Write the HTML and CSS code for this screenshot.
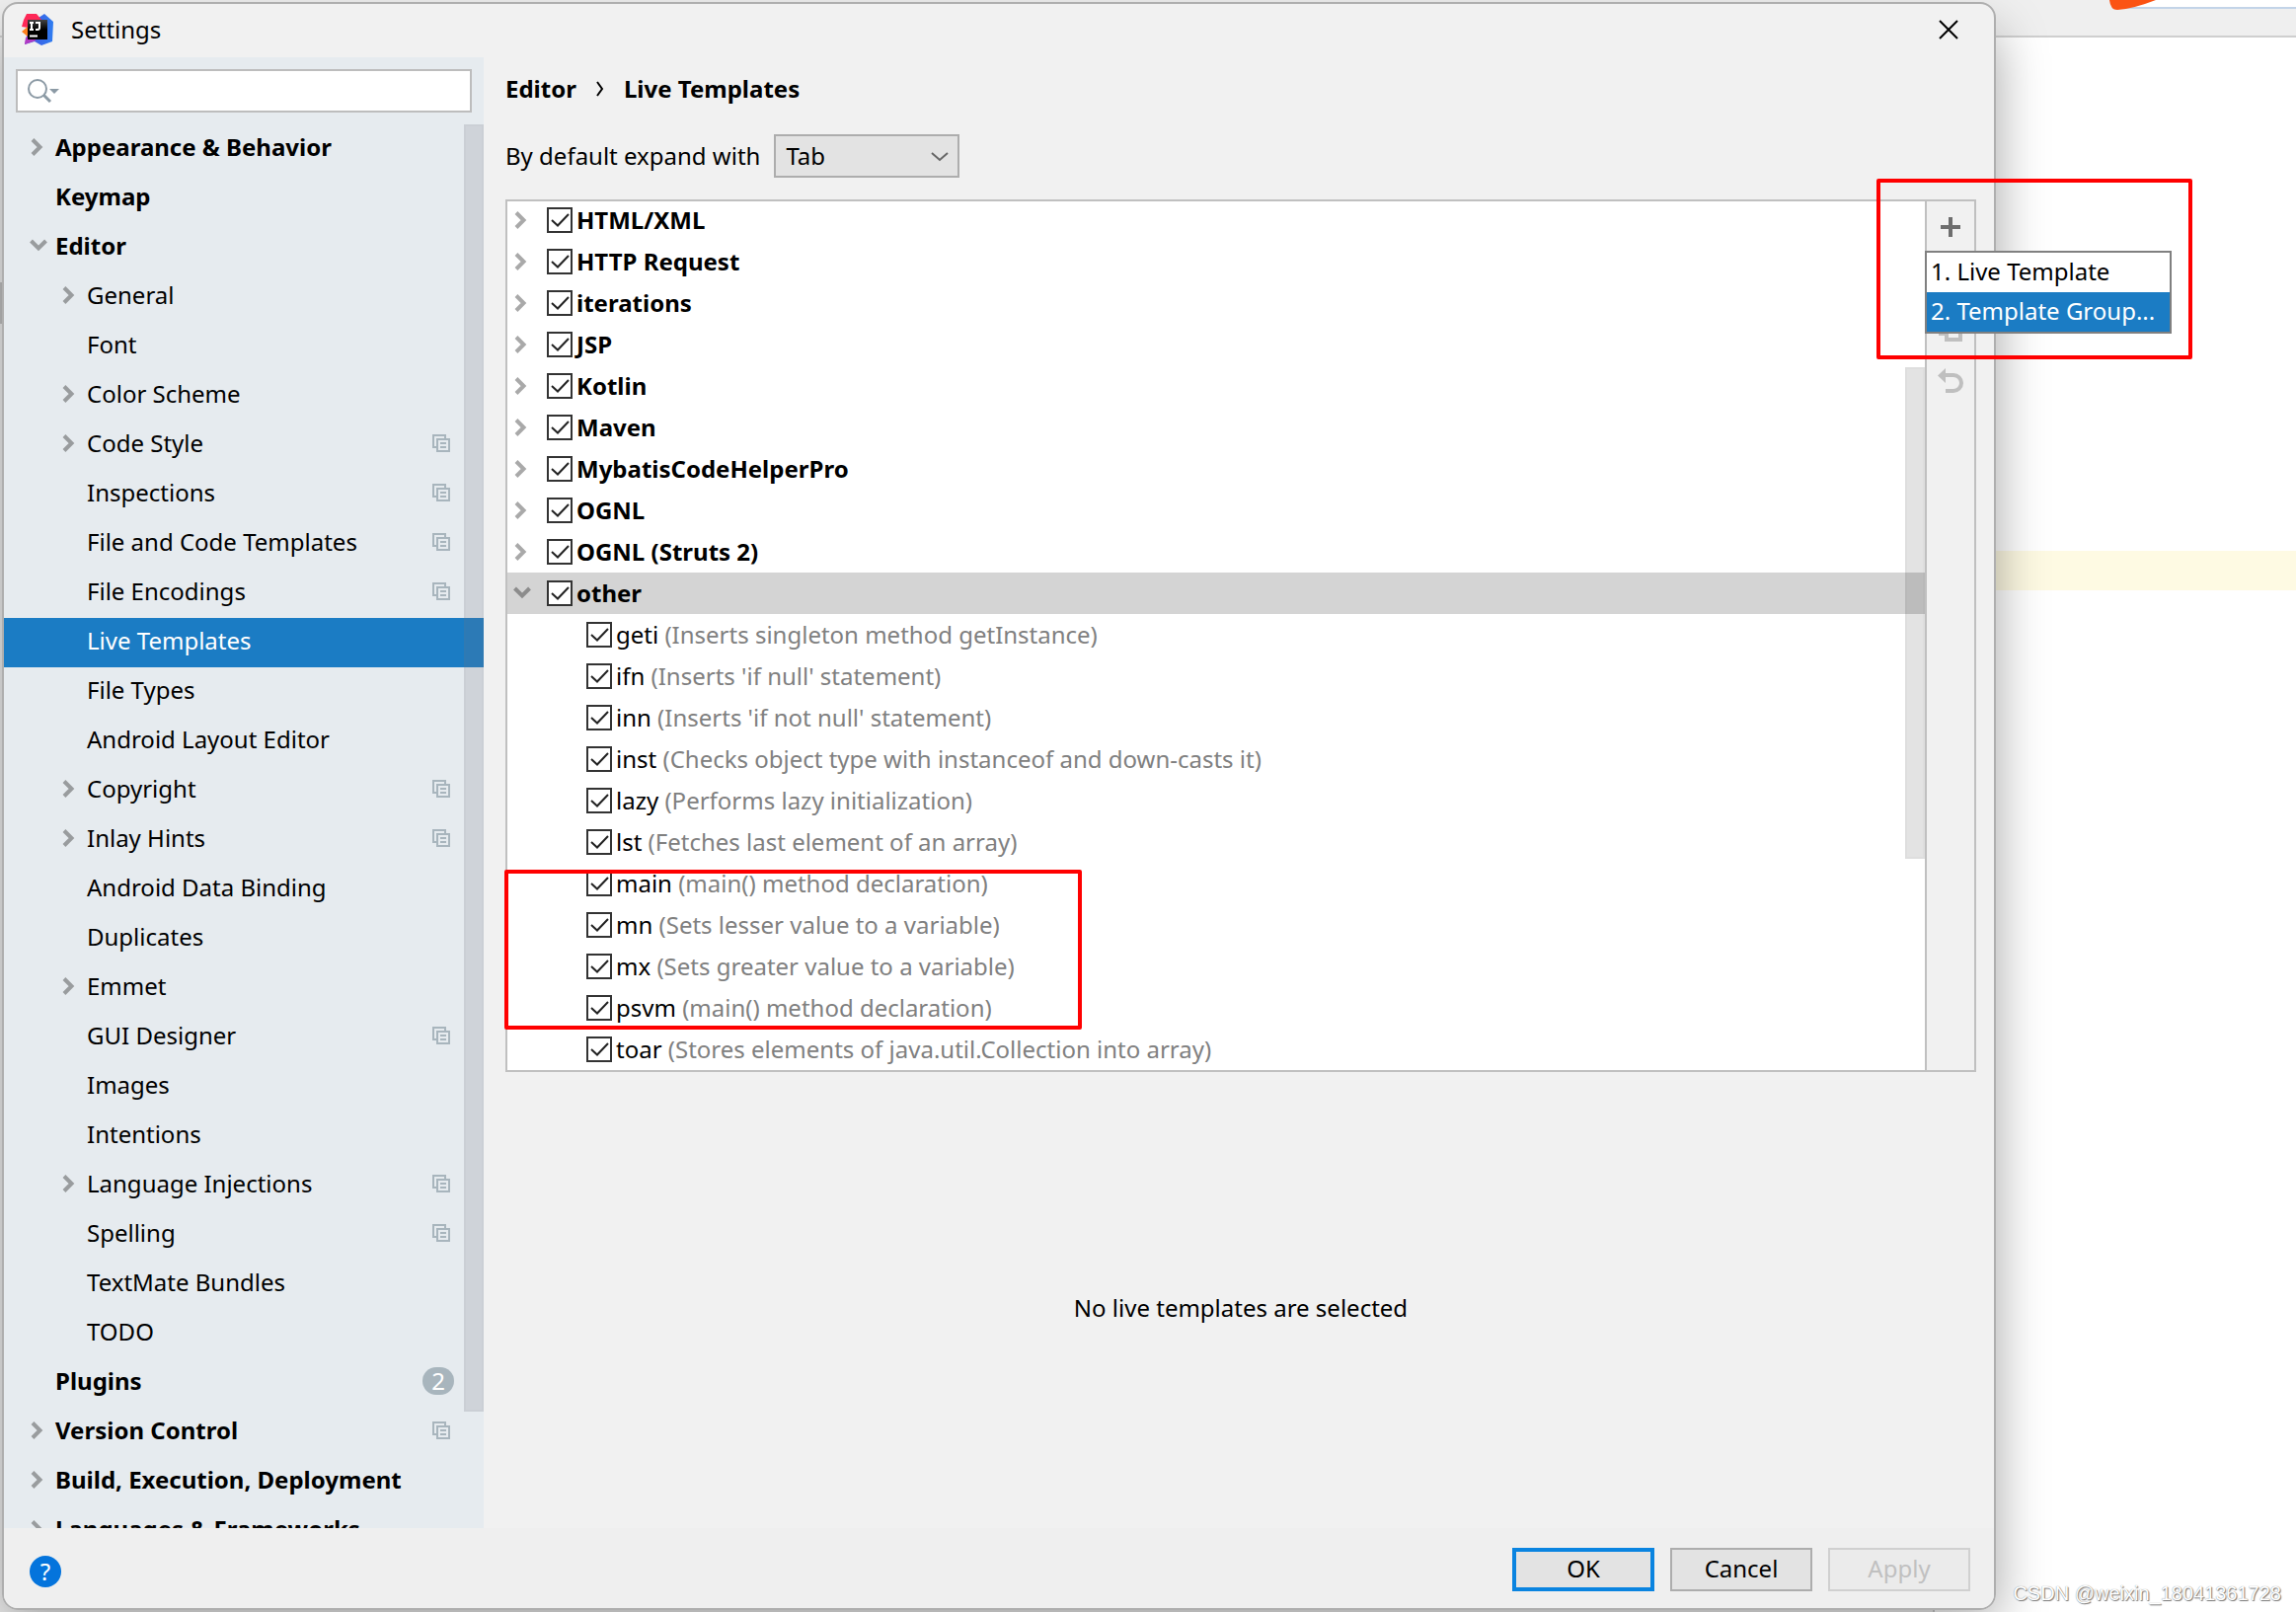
FILE: index.html
```html
<!DOCTYPE html>
<html lang="en">
<head>
<meta charset="utf-8">
<title>Settings</title>
<link rel="stylesheet" href="styles.css">
</head>
<body>
<svg width="0" height="0" class="defs" aria-hidden="true">
  <symbol id="right" viewBox="0 0 18 18"><path d="M3 1.500 10.500 9 3 16.500" fill="none" stroke="currentColor" stroke-width="4"/></symbol>
  <symbol id="down" viewBox="0 0 18 18"><path d="M1.500 4 9 11.500 16.500 4" fill="none" stroke="currentColor" stroke-width="4"/></symbol>
  <symbol id="copy" viewBox="0 0 18 18"><path d="M4 13H1V1h12v3M5 5h12v12H5zM8 9h6M8 13h6" fill="none" stroke="currentColor" stroke-width="2"/></symbol>
</svg>
<div class="backdrop" aria-hidden="true">
  <div class="ide-bar"><div class="ide-field"></div></div>
  <div class="caret-row"></div>
  <div class="ide-rail"></div>
  <div class="ide-status"></div>
  <svg class="brand" width="50" height="10" viewBox="0 0 50 10"><path d="M0 0Q1 10 8 10 24 9 47 0z" fill="#fb5314"/></svg>
</div>
<main class="dialog">
  <header class="title-bar">
    <svg width="32" height="32" viewBox="0 0 32 32" aria-hidden="true">
      <defs>
        <linearGradient id="g1" x1="0" y1="0" x2="1" y2="0"><stop offset="0" stop-color="#7a3bd0"/><stop offset=".5" stop-color="#3a66e8"/><stop offset="1" stop-color="#2f7df0"/></linearGradient>
        <linearGradient id="g2" x1="0" y1="0" x2="0" y2="1"><stop offset="0" stop-color="#444"/><stop offset=".5" stop-color="#000"/></linearGradient>
      </defs>
      <path d="M17 4 23 0l9 8-1 20-11 4-7-4-10 3 2-9z" fill="url(#g1)"/>
      <path d="M5 0h10l5 6-14 8-6-1 2-7z" fill="#fe2857"/>
      <path d="M0 18l6-5v10z" fill="#fc801d"/>
      <path d="M4 24 3 31l11-4v-3z" fill="#b13bc4"/>
      <path d="M6 6h20v20H6z" fill="url(#g2)"/>
      <path d="M8 9h4M8 16h4M10 9v7M14 9h4v5q0 2-2 2h-2M8 22.500h8" fill="none" stroke="#fff" stroke-width="2"/>
    </svg>
    <h1>Settings</h1>
    <button class="close" aria-label="Close"><svg width="20" height="20" viewBox="0 0 20 20"><path d="M1 1 19 19M19 1 1 19" stroke="#000" stroke-width="2"/></svg></button>
  </header>
  <div class="body">
    <aside class="sidebar">
      <label class="search">
        <svg width="34" height="26" viewBox="0 0 34 26" aria-hidden="true"><circle cx="10" cy="11" r="9" fill="none" stroke="#8c9aa5" stroke-width="2"/><path d="M16 17 23 24" stroke="#8c9aa5" stroke-width="3"/><path d="M22 11h10l-5 5z" fill="#8c9aa5"/></svg>
        <input type="text" aria-label="Search settings">
      </label>
      <nav class="tree" id="tree"></nav>
    </aside>
    <section class="content">
      <h2 class="crumbs"><span>Editor</span><svg width="8" height="16" viewBox="0 0 8 16" aria-hidden="true"><path d="M1 1 6 8 1 15" fill="none" stroke="#000" stroke-width="2"/></svg><span>Live Templates</span></h2>
      <div class="expand"><label for="key">By default expand with</label>
        <div class="combo"><select id="key"><option>Tab</option><option>Enter</option><option>Space</option></select>
        <svg width="18" height="10" viewBox="0 0 18 10" aria-hidden="true"><path d="M1 1 9 8 17 1" fill="none" stroke="#666" stroke-width="2"/></svg></div></div>
      <div class="panel">
        <div class="list" id="list"></div>
        <div class="tools">
          <button aria-label="Add"><svg width="20" height="20" viewBox="0 0 20 20"><path d="M10 0v20M0 10h20" stroke="#6e6e6e" stroke-width="4"/></svg></button>
          <button aria-label="Remove" disabled></button>
          <button aria-label="Duplicate" disabled><svg width="24" height="24" viewBox="0 0 24 24"><path d="M2 0v16h4M8 6h14v16H8z" fill="none" stroke="#bfbfbf" stroke-width="4"/></svg></button>
          <button aria-label="Restore" disabled><svg width="26" height="26" viewBox="0 0 26 26"><path d="M7 7h9a8 8 0 0 1 0 16H8" fill="none" stroke="#bfbfbf" stroke-width="4"/><path d="M0 7.500 8 0v15z" fill="#bfbfbf"/></svg></button>
          <div class="popup" role="menu"><button role="menuitem">1. Live Template</button><button role="menuitem" class="active">2. Template Group...</button></div>
        </div>
      </div>
      <p class="empty">No live templates are selected</p>
    </section>
  </div>
  <footer class="footer">
    <button class="help" aria-label="Help">?</button>
    <button class="btn primary">OK</button><button class="btn">Cancel</button><button class="btn" disabled>Apply</button>
  </footer>
</main>
<div class="mark mark-menu"></div>
<div class="mark mark-rows"></div>
<div class="watermark">CSDN @weixin_18041361728</div>
<script src="app.js"></script>
</body>
</html>
```
FILE: styles.css
```css
*, *::before, *::after { box-sizing: border-box; }
html, body { height: 100%; }
body { margin: 0; position: relative; overflow: hidden; background: #fff; color: #000; font: 24px/32px "Noto Sans", "Open Sans", sans-serif; }
button, input, select { font: inherit; color: inherit; margin: 0; padding: 0; border: 0; border-radius: 0; background: none; }
h1, h2, p { margin: 0; font-size: inherit; }
svg { display: block; flex: none; }
.defs { position: absolute; }

.backdrop { position: absolute; inset: 0; background: #fff; }
.ide-bar { height: 38px; background: #efefef; border-bottom: 2px solid #cfcfcf; display: flex; justify-content: flex-end; }
.ide-field { width: 186px; height: 9px; background: #fff; border-bottom: 2px solid #c3d4e8; }
.caret-row { position: absolute; top: 558px; left: 0; right: 0; height: 40px; background: #fefae3; }
.ide-rail { position: absolute; top: 38px; bottom: 0; left: 0; width: 16px; background: linear-gradient(#f1f1f1 248px, #c4c4c4 248px, #c4c4c4 290px, #f1f1f1 290px); }
.ide-status { position: absolute; bottom: 0; left: 0; right: 366px; height: 16px; background: #efefef; border-right: 2px solid #ccc; }
.brand { position: absolute; top: 0; right: 139px; }

.dialog { position: relative; display: flex; flex-direction: column; height: calc(100% - 4px); margin: 0 304px 0 2px; top: 2px; border: 2px solid #aeaeae; border-radius: 16px; background: #f1f1f1; }
.backdrop::after { content: ""; position: absolute; inset: 20px 304px 2px 2px; border-radius: 16px; box-shadow: 0 12px 52px rgba(0,0,0,.36); }
.title-bar { display: flex; align-items: center; height: 54px; padding: 0 36px 2px 18px; gap: 18px; flex: none; }
.title-bar h1 { font-weight: 400; flex: 1; }
.body { flex: 1; display: flex; min-height: 0; }

.sidebar { width: 486px; flex: none; background: #e6ebef; display: flex; flex-direction: column; padding-top: 12px; }
.search { display: flex; align-items: center; height: 44px; margin: 0 12px; padding-left: 10px; border: 2px solid #bdbdbd; background: #fff; flex: none; }
.search input { flex: 1; min-width: 0; outline: 0; }
.tree { position: relative; flex: 1; min-height: 0; margin-top: 12px; overflow: hidden; }
.tree::after { content: ""; position: absolute; top: 0; right: 0; width: 20px; height: 1304px; background: rgba(116,116,128,.2); border: 2px solid rgba(116,116,128,.04); }
.node { display: flex; align-items: center; height: 50px; padding: 0 34px 4px 26px; gap: 8px; color: inherit; text-decoration: none; white-space: nowrap; }
.node svg { color: #999c9e; }
.node .name { flex: 1; }
.node .spacer { width: 18px; flex: none; }
.node.top { font-weight: 700; }
.node.child { padding-left: 58px; }
.node.on { background: #1b7cc4; color: #fff; }
.node .shared { color: #a8b5bd; }
.count { width: 32px; height: 28px; margin-right: -4px; border-radius: 14px; background: #a8b5bd; color: #fff; font-weight: 400; line-height: 28px; text-align: center; }

.content { flex: 1; min-width: 0; display: flex; flex-direction: column; padding: 16px 18px 0 22px; }
.crumbs { display: flex; align-items: center; gap: 20px; font-weight: 700; }
.expand { display: flex; align-items: center; gap: 14px; margin-top: 30px; }
.combo { position: relative; width: 188px; height: 44px; border: 2px solid #adadad; background: #e3e3e3; }
.combo select { appearance: none; width: 100%; height: 40px; padding-left: 10px; outline: 0; }
.combo svg { position: absolute; right: 9px; top: 16px; pointer-events: none; }
.panel { display: flex; margin-top: 22px; height: 884px; flex: none; border: 2px solid #c0c0c0; }
.list { position: relative; flex: 1; min-width: 0; overflow: hidden; background: #fff; display: flex; flex-direction: column; justify-content: flex-end; }
.list::after { content: ""; position: absolute; right: 0; top: 168px; width: 20px; height: 498px; background: rgba(0,0,0,.11); border: 2px solid rgba(0,0,0,.02); }
.row { display: flex; align-items: center; height: 42px; flex: none; padding-left: 6px; white-space: nowrap; color: #a9a9a9; }
.row.open { background: #d4d4d4; color: #8c8c8c; }
.row label { display: flex; align-items: center; gap: 4px; margin-left: 16px; color: #000; }
.row.group label { font-weight: 700; }
.row.leaf label { margin-left: 74px; }
.row em { font-style: normal; color: #808080; }
.row input { appearance: none; width: 26px; height: 26px; border: 2px solid #333; background: #fff; }
.row .box { position: relative; display: block; height: 26px; }
.row .box input { display: block; }
.row .box svg { position: absolute; inset: 0; pointer-events: none; }
.tools { position: relative; width: 50px; flex: none; border-left: 2px solid #c0c0c0; }
.tools > button { display: flex; align-items: center; justify-content: center; width: 48px; height: 52px; }
.popup { position: absolute; z-index: 2; top: 50px; left: -2px; width: 250px; border: 2px solid #808080; background: #fff; }
.popup button { display: block; width: 100%; height: 40px; padding: 0 0 2px 4px; text-align: left; white-space: nowrap; }
.popup .active { background: #1b7cc4; color: #fff; }
.empty { flex: 1; display: flex; align-items: center; justify-content: center; padding-top: 16px; }

.footer { display: flex; align-items: center; gap: 16px; height: 81px; padding: 3px 24px 0 26px; border-radius: 0 0 14px 14px; background: #efefef; flex: none; }
.help { width: 32px; height: 32px; margin: 4px auto 0 0; border-radius: 50%; background: #0474dc; color: #fff; text-align: center; }
.btn { width: 144px; height: 44px; padding-bottom: 2px; border: 2px solid #adadad; background: #e3e3e3; }
.btn.primary { border: 4px solid #0a84e0; }
.btn:disabled { border-color: #d0d0d0; background: #ebebeb; color: #c0c0c0; }

.mark { position: absolute; z-index: 3; border: 4px solid #f00; border-radius: 2px; pointer-events: none; }
.mark-menu { left: 1901px; top: 181px; width: 320px; height: 183px; }
.mark-rows { left: 511px; top: 881px; width: 585px; height: 162px; }
.watermark { position: absolute; right: 15px; bottom: 5px; font: 20px/28px "Liberation Sans", sans-serif; color: #fff; text-shadow: 1px 1px 1px #777, 0 0 1px #777; }
```
FILE: app.js
```js
const icon = (id, cls = '') => `<svg class="${cls}" width="18" height="18" aria-hidden="true"><use href="#${id}"/></svg>`;

// [label, level, arrow, trailing marker]
const settings = [
  ['Appearance &amp; Behavior', 0, 'right'], ['Keymap', 0], ['Editor', 0, 'down'],
  ['General', 1, 'right'], ['Font', 1], ['Color Scheme', 1, 'right'],
  ['Code Style', 1, 'right', 'copy'], ['Inspections', 1, '', 'copy'],
  ['File and Code Templates', 1, '', 'copy'], ['File Encodings', 1, '', 'copy'],
  ['Live Templates', 1], ['File Types', 1], ['Android Layout Editor', 1],
  ['Copyright', 1, 'right', 'copy'], ['Inlay Hints', 1, 'right', 'copy'],
  ['Android Data Binding', 1], ['Duplicates', 1], ['Emmet', 1, 'right'],
  ['GUI Designer', 1, '', 'copy'], ['Images', 1], ['Intentions', 1],
  ['Language Injections', 1, 'right', 'copy'], ['Spelling', 1, '', 'copy'],
  ['TextMate Bundles', 1], ['TODO', 1], ['Plugins', 0, '', '2'],
  ['Version Control', 0, 'right', 'copy'], ['Build, Execution, Deployment', 0, 'right'],
  ['Languages &amp; Frameworks', 0, 'right']
];
document.getElementById('tree').innerHTML = settings.map(([name, level, arrow, end]) =>
  `<a href="#" class="node ${level ? 'child' : 'top'}${name === 'Live Templates' ? ' on' : ''}">` +
  (arrow ? icon(arrow) : '<span class="spacer"></span>') + `<span class="name">${name}</span>` +
  (end === 'copy' ? icon('copy', 'shared') : end ? `<span class="count">${end}</span>` : '') + '</a>').join('');

const groups = ['HTML/XML', 'HTTP Request', 'iterations', 'JSP', 'Kotlin', 'Maven', 'MybatisCodeHelperPro', 'OGNL', 'OGNL (Struts 2)', 'other'];
const templates = [
  ['geti', "Inserts singleton method getInstance"], ['ifn', "Inserts 'if null' statement"],
  ['inn', "Inserts 'if not null' statement"], ['inst', 'Checks object type with instanceof and down-casts it'],
  ['lazy', 'Performs lazy initialization'], ['lst', 'Fetches last element of an array'],
  ['main', 'main() method declaration'], ['mn', 'Sets lesser value to a variable'],
  ['mx', 'Sets greater value to a variable'], ['psvm', 'main() method declaration'],
  ['toar', 'Stores elements of java.util.Collection into array']
];
const box = '<span class="box"><input type="checkbox" checked><svg width="26" height="26" viewBox="0 0 26 26"><path d="M5 13 11 18.500 22 7" fill="none" stroke="#222" stroke-width="2"/></svg></span>';
document.getElementById('list').innerHTML =
  groups.map(g => `<div class="row group${g === 'other' ? ' open' : ''}">${icon(g === 'other' ? 'down' : 'right')}<label>${box}<span>${g}</span></label></div>`).join('') +
  templates.map(([k, d]) => `<div class="row leaf"><label>${box}<span>${k} <em>(${d})</em></span></label></div>`).join('');
```
